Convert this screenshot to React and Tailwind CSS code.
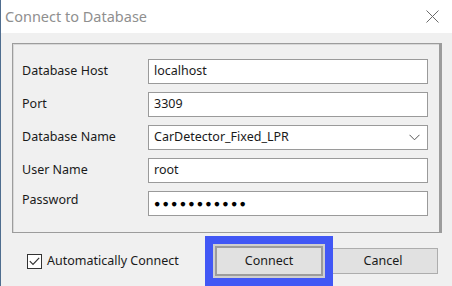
export default function App() {
  const fields = [
    { label: "Database Host", value: "localhost" },
    { label: "Port", value: "3309" },
    { label: "Database Name", value: "CarDetector_Fixed_LPR", select: true },
    { label: "User Name", value: "root" },
    { label: "Password", value: "●●●●●●●●●●●", secret: true },
  ];

  return (
    <div
      className="w-[452px] h-[286px] overflow-hidden flex flex-col border-l border-[#4f6d8f] bg-[#f0f0f0] text-[#1a1a1a]"
      style={{ fontFamily: '"Noto Sans", "Open Sans", sans-serif' }}
    >
      {/* Title bar */}
      <div className="h-[33px] shrink-0 bg-white flex items-center justify-between pl-[4px] pr-[13px]">
        <span className="text-[14.5px] text-[#8f8f8f]">Connect to Database</span>
        <svg width="13" height="13" viewBox="0 0 13 13">
          <path d="M0.5 0.5 L12.5 12.5 M12.5 0.5 L0.5 12.5" stroke="#6b6b6b" strokeWidth="1" />
        </svg>
      </div>

      {/* Group box */}
      <div className="mt-[10px] ml-[11px] w-[430px] h-[190px] shrink-0 border border-[#9c9c9c] border-r-[3px] shadow-[inset_1px_1px_0_#d8d8d8] pt-[15px] pl-[9px]">
        <div className="flex flex-col gap-[8px]">
          {fields.map((f) => (
            <div key={f.label} className="flex items-center h-[25px]">
              <span className={`w-[126px] text-[12.5px] ${f.secret ? "-mt-[6px]" : ""}`}>{f.label}</span>
              <div className="w-[280px] h-[25px] bg-white border border-[#9a9a9a] flex items-center justify-between pl-[5px] pr-[7px]">
                {f.secret ? (
                  <span className="text-[10.5px] tracking-[2.2px] text-black">{f.value}</span>
                ) : (
                  <span className="text-[12.5px]">{f.value}</span>
                )}
                {f.select && (
                  <svg width="11" height="7" viewBox="0 0 11 7">
                    <polyline points="0.5,0.8 5.5,5.8 10.5,0.8" fill="none" stroke="#555" strokeWidth="1" />
                  </svg>
                )}
              </div>
            </div>
          ))}
        </div>
      </div>

      {/* Bottom row */}
      <div className="mt-[3px] flex items-start pl-[26px]">
        <div className="w-[178px] h-[50px] flex items-center gap-[5px]">
          <div className="w-[15px] h-[15px] bg-white border border-[#333] flex items-center justify-center">
            <svg width="11" height="9" viewBox="0 0 11 9">
              <polyline points="0.8,4.2 4,7.5 10.2,0.8" fill="none" stroke="#333" strokeWidth="1.2" />
            </svg>
          </div>
          <span className="text-[12.5px]">Automatically Connect</span>
        </div>
        <div className="w-[128px] h-[50px] shrink-0 border-[8px] border-[#4157f5]">
          <div className="w-full h-full bg-[#cfcfcf] p-[2px]">
            <div className="w-full h-full border-2 border-[#9c9c9c] bg-[#e1e1e1] flex items-center justify-center text-[12.5px]">
              Connect
            </div>
          </div>
        </div>
        <div className="self-center w-[105px] h-[26px] border border-l-0 border-[#adadad] bg-[#e1e1e1] flex items-center justify-center text-[12.5px]">
          <span className="-ml-[4px]">Cancel</span>
        </div>
      </div>
    </div>
  );
}
